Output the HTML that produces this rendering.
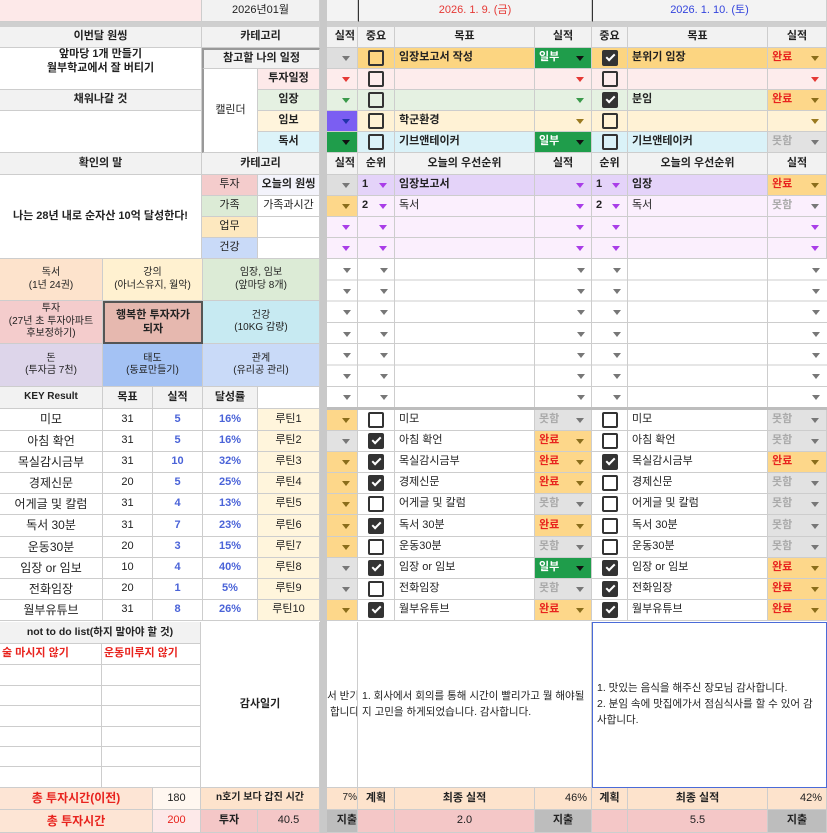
<!DOCTYPE html>
<html><head><meta charset="utf-8"><style>
body{margin:0;width:827px;height:833px;position:relative;overflow:hidden;background:#fff;font-family:"Liberation Sans","Noto Sans CJK KR",sans-serif;color:#222}
.c{position:absolute;box-sizing:border-box;border-right:1px solid #cdcdcd;border-bottom:1px solid #cdcdcd;display:flex;align-items:center;justify-content:center;font-size:11px;overflow:hidden;white-space:nowrap;text-align:center;line-height:1.25}
.l{justify-content:flex-start;padding-left:4px}
.h{background:#f2f2f2;font-weight:bold}
.b{font-weight:bold}
.w{white-space:normal}
.dd{position:absolute;right:7px;top:50%;margin-top:-2px;width:0;height:0;border-left:4px solid transparent;border-right:4px solid transparent;border-top:5px solid #777}
.cb{width:12px;height:12px;border:2px solid #333;border-radius:2px;box-sizing:content-box;position:relative}
.cb.k{background:#333}
.cb.k:after{content:"";position:absolute;left:4px;top:0px;width:3px;height:7px;border:solid #fff;border-width:0 2px 2px 0;transform:rotate(45deg)}
.red{color:#e8231e;font-weight:bold}
.gr{color:#aaa;font-weight:bold}
.blu{color:#4a63d8;font-weight:bold}
</style></head><body>
<!-- top row -->
<div class="c" style="left:0;top:0;width:202px;height:22px;background:#fde9e9"></div>
<div class="c h" style="left:202px;top:0;width:118px;height:22px;font-weight:normal">2026년01월</div>
<div class="c" style="left:327px;top:0;width:31px;height:22px;background:#f3f3f3"></div>
<div class="c" style="left:358px;top:0;width:234px;height:22px;background:#f3f3f3;color:#e53935;border-left:1px solid #333">2026. 1. 9. (금)</div>
<div class="c" style="left:592px;top:0;width:235px;height:22px;background:#f3f3f3;color:#3344dd;border-left:1px solid #333">2026. 1. 10. (토)</div>
<div style="position:absolute;left:0;top:22px;width:827px;height:5px;background:#cfcfcf"></div>
<div style="position:absolute;left:320px;top:0;width:7px;height:833px;background:#c9c9c9"></div>

<!-- left top -->
<div class="c h" style="left:0;top:27px;width:202px;height:21px">이번달 원씽</div>
<div class="c b w" style="left:0;top:48px;width:202px;height:42px;align-items:flex-start">앞마당 1개 만들기<br>월부학교에서 잘 버티기</div>
<div class="c h" style="left:0;top:90px;width:202px;height:21px">채워나갈 것</div>
<div class="c" style="left:0;top:111px;width:202px;height:42px"></div>
<div class="c h" style="left:0;top:153px;width:202px;height:22px">확인의 말</div>
<div class="c b" style="left:0;top:175px;width:202px;height:84px">나는 28년 내로 순자산 10억 달성한다!</div>

<div class="c h" style="left:202px;top:27px;width:118px;height:21px">카테고리</div>
<div class="c h" style="left:202px;top:48px;width:118px;height:21px;border-left:2px solid #999;border-top:2px solid #999">참고할 나의 일정</div>
<div class="c" style="left:202px;top:69px;width:56px;height:84px;border-left:2px solid #999">캘린더</div>
<div class="c b" style="left:258px;top:69px;width:62px;height:21px;background:#fde9e9">투자일정</div>
<div class="c b" style="left:258px;top:90px;width:62px;height:21px;background:#e5f1e2">임장</div>
<div class="c b" style="left:258px;top:111px;width:62px;height:21px;background:#fff4dc">임보</div>
<div class="c b" style="left:258px;top:132px;width:62px;height:21px;background:#dcf3f9">독서</div>
<div class="c h" style="left:202px;top:153px;width:118px;height:22px">카테고리</div>
<div class="c" style="left:202px;top:175px;width:56px;height:21px;background:#f4cccc">투자</div>
<div class="c b" style="left:258px;top:175px;width:62px;height:21px;background:#f3f3fb">오늘의 원씽</div>
<div class="c" style="left:202px;top:196px;width:56px;height:21px;background:#dcebd6">가족</div>
<div class="c" style="left:258px;top:196px;width:62px;height:21px">가족과시간</div>
<div class="c" style="left:202px;top:217px;width:56px;height:21px;background:#fde8bf">업무</div>
<div class="c" style="left:258px;top:217px;width:62px;height:21px"></div>
<div class="c" style="left:202px;top:238px;width:56px;height:21px;background:#c9daf8">건강</div>
<div class="c" style="left:258px;top:238px;width:62px;height:21px"></div>

<!-- mandalart -->
<div class="c w" style="left:0;top:259px;width:103px;height:42px;background:#fde3cc;font-size:10px">독서<br>(1년 24권)</div>
<div class="c w" style="left:103px;top:259px;width:100px;height:42px;background:#fff1d0;font-size:10px">강의<br>(아너스유지, 월악)</div>
<div class="c w" style="left:203px;top:259px;width:117px;height:42px;background:#dcebd6;font-size:10px">임장, 임보<br>(앞마당 8개)</div>
<div class="c w" style="left:0;top:301px;width:103px;height:43px;background:#f4cccc;font-size:10px">투자<br>(27년 초 투자아파트<br>후보정하기)</div>
<div class="c b w" style="left:103px;top:301px;width:100px;height:43px;background:#e6b8af;border:2px solid #555">행복한 투자자가<br>되자</div>
<div class="c w" style="left:203px;top:301px;width:117px;height:43px;background:#c7eaf2;font-size:10px">건강<br>(10KG 감량)</div>
<div class="c w" style="left:0;top:344px;width:103px;height:43px;background:#ddd5ea;font-size:10px">돈<br>(투자금 7천)</div>
<div class="c w" style="left:103px;top:344px;width:100px;height:43px;background:#a4c2f4;font-size:10px">태도<br>(동료만들기)</div>
<div class="c w" style="left:203px;top:344px;width:117px;height:43px;background:#c9daf8;font-size:10px">관계<br>(유리공 관리)</div>

<div class="c h" style="left:0;top:387px;width:103px;height:22px;font-size:10px">KEY Result</div>
<div class="c h" style="left:103px;top:387px;width:50px;height:22px">목표</div>
<div class="c h" style="left:153px;top:387px;width:50px;height:22px">실적</div>
<div class="c h" style="left:203px;top:387px;width:55px;height:22px">달성률</div>
<div class="c" style="left:258px;top:387px;width:62px;height:22px"></div>

<!-- routine left -->
<div class="c" style="left:0;top:409px;width:103px;height:22px;font-size:12px">미모</div><div class="c" style="left:103px;top:409px;width:50px;height:22px">31</div><div class="c blu" style="left:153px;top:409px;width:50px;height:22px">5</div><div class="c blu" style="left:203px;top:409px;width:55px;height:22px">16%</div><div class="c" style="left:258px;top:409px;width:62px;height:22px;background:#fff5dc">루틴1</div>
<div class="c" style="left:0;top:431px;width:103px;height:21px;font-size:12px">아침 확언</div><div class="c" style="left:103px;top:431px;width:50px;height:21px">31</div><div class="c blu" style="left:153px;top:431px;width:50px;height:21px">5</div><div class="c blu" style="left:203px;top:431px;width:55px;height:21px">16%</div><div class="c" style="left:258px;top:431px;width:62px;height:21px;background:#fff5dc">루틴2</div>
<div class="c" style="left:0;top:452px;width:103px;height:21px;font-size:12px">목실감시금부</div><div class="c" style="left:103px;top:452px;width:50px;height:21px">31</div><div class="c blu" style="left:153px;top:452px;width:50px;height:21px">10</div><div class="c blu" style="left:203px;top:452px;width:55px;height:21px">32%</div><div class="c" style="left:258px;top:452px;width:62px;height:21px;background:#fff5dc">루틴3</div>
<div class="c" style="left:0;top:473px;width:103px;height:21px;font-size:12px">경제신문</div><div class="c" style="left:103px;top:473px;width:50px;height:21px">20</div><div class="c blu" style="left:153px;top:473px;width:50px;height:21px">5</div><div class="c blu" style="left:203px;top:473px;width:55px;height:21px">25%</div><div class="c" style="left:258px;top:473px;width:62px;height:21px;background:#fff5dc">루틴4</div>
<div class="c" style="left:0;top:494px;width:103px;height:21px;font-size:12px">어게글 및 칼럼</div><div class="c" style="left:103px;top:494px;width:50px;height:21px">31</div><div class="c blu" style="left:153px;top:494px;width:50px;height:21px">4</div><div class="c blu" style="left:203px;top:494px;width:55px;height:21px">13%</div><div class="c" style="left:258px;top:494px;width:62px;height:21px;background:#fff5dc">루틴5</div>
<div class="c" style="left:0;top:515px;width:103px;height:22px;font-size:12px">독서 30분</div><div class="c" style="left:103px;top:515px;width:50px;height:22px">31</div><div class="c blu" style="left:153px;top:515px;width:50px;height:22px">7</div><div class="c blu" style="left:203px;top:515px;width:55px;height:22px">23%</div><div class="c" style="left:258px;top:515px;width:62px;height:22px;background:#fff5dc">루틴6</div>
<div class="c" style="left:0;top:537px;width:103px;height:21px;font-size:12px">운동30분</div><div class="c" style="left:103px;top:537px;width:50px;height:21px">20</div><div class="c blu" style="left:153px;top:537px;width:50px;height:21px">3</div><div class="c blu" style="left:203px;top:537px;width:55px;height:21px">15%</div><div class="c" style="left:258px;top:537px;width:62px;height:21px;background:#fff5dc">루틴7</div>
<div class="c" style="left:0;top:558px;width:103px;height:21px;font-size:12px">임장 or 임보</div><div class="c" style="left:103px;top:558px;width:50px;height:21px">10</div><div class="c blu" style="left:153px;top:558px;width:50px;height:21px">4</div><div class="c blu" style="left:203px;top:558px;width:55px;height:21px">40%</div><div class="c" style="left:258px;top:558px;width:62px;height:21px;background:#fff5dc">루틴8</div>
<div class="c" style="left:0;top:579px;width:103px;height:21px;font-size:12px">전화임장</div><div class="c" style="left:103px;top:579px;width:50px;height:21px">20</div><div class="c blu" style="left:153px;top:579px;width:50px;height:21px">1</div><div class="c blu" style="left:203px;top:579px;width:55px;height:21px">5%</div><div class="c" style="left:258px;top:579px;width:62px;height:21px;background:#fff5dc">루틴9</div>
<div class="c" style="left:0;top:600px;width:103px;height:21px;font-size:12px">월부유튜브</div><div class="c" style="left:103px;top:600px;width:50px;height:21px">31</div><div class="c blu" style="left:153px;top:600px;width:50px;height:21px">8</div><div class="c blu" style="left:203px;top:600px;width:55px;height:21px">26%</div><div class="c" style="left:258px;top:600px;width:62px;height:21px;background:#fff5dc">루틴10</div>

<!-- not to do -->
<div class="c h" style="left:0;top:622px;width:201px;height:22px;font-size:10.5px">not to do list(하지 말아야 할 것)</div>
<div class="c red l" style="left:0;top:644px;width:102px;height:21px;padding-left:2px">술 마시지 않기</div>
<div class="c red l" style="left:102px;top:644px;width:99px;height:21px;padding-left:2px">운동미루지 않기</div>
<div class="c" style="left:0;top:665px;width:102px;height:21px"></div><div class="c" style="left:102px;top:665px;width:99px;height:21px"></div>
<div class="c" style="left:0;top:686px;width:102px;height:20px"></div><div class="c" style="left:102px;top:686px;width:99px;height:20px"></div>
<div class="c" style="left:0;top:706px;width:102px;height:21px"></div><div class="c" style="left:102px;top:706px;width:99px;height:21px"></div>
<div class="c" style="left:0;top:727px;width:102px;height:20px"></div><div class="c" style="left:102px;top:727px;width:99px;height:20px"></div>
<div class="c" style="left:0;top:747px;width:102px;height:20px"></div><div class="c" style="left:102px;top:747px;width:99px;height:20px"></div>
<div class="c" style="left:0;top:767px;width:102px;height:21px"></div><div class="c" style="left:102px;top:767px;width:99px;height:21px"></div>
<div class="c b" style="left:201px;top:622px;width:119px;height:166px">감사일기</div>

<!-- bottom left -->
<div class="c red" style="left:0;top:788px;width:153px;height:22px;background:#fde5d5;font-size:12px">총 투자시간(이전)</div>
<div class="c" style="left:153px;top:788px;width:48px;height:22px;background:#fff7f0">180</div>
<div class="c b" style="left:201px;top:788px;width:119px;height:22px;background:#fde3cc;font-size:10px">n호기 보다 갑진 시간</div>
<div class="c red" style="left:0;top:810px;width:153px;height:23px;background:#fde5d5;font-size:12px">총 투자시간</div>
<div class="c red" style="left:153px;top:810px;width:48px;height:23px;background:#fde9e9;font-weight:normal">200</div>
<div class="c b" style="left:201px;top:810px;width:57px;height:23px;background:#f4c7c7">투자</div>
<div class="c" style="left:258px;top:810px;width:62px;height:23px;background:#f4c7c7">40.5</div>

<!-- RIGHT: block 1 headers -->
<div class="c h" style="left:327px;top:27px;width:31px;height:21px;justify-content:flex-end;padding-right:2px">실적</div>
<div class="c h" style="left:358px;top:27px;width:37px;height:21px">중요</div>
<div class="c h" style="left:395px;top:27px;width:140px;height:21px">목표</div>
<div class="c h" style="left:535px;top:27px;width:57px;height:21px">실적</div>
<div class="c h" style="left:592px;top:27px;width:36px;height:21px">중요</div>
<div class="c h" style="left:628px;top:27px;width:140px;height:21px">목표</div>
<div class="c h" style="left:768px;top:27px;width:59px;height:21px">실적</div>

<!-- r1 -->
<div class="c" style="left:327px;top:48px;width:31px;height:21px;background:#dedede"><span class="dd"></span></div>
<div class="c" style="left:358px;top:48px;width:37px;height:21px;background:#fcd581"><span class="cb"></span></div>
<div class="c l b" style="left:395px;top:48px;width:140px;height:21px;background:#fcd581">임장보고서 작성</div>
<div class="c l b" style="left:535px;top:48px;width:57px;height:21px;background:#1f9d4b;color:#fff">일부<span class="dd" style="border-top-color:#111"></span></div>
<div class="c" style="left:592px;top:48px;width:36px;height:21px;background:#fcd581"><span class="cb k"></span></div>
<div class="c l b" style="left:628px;top:48px;width:140px;height:21px;background:#fcd581">분위기 임장</div>
<div class="c l red" style="left:768px;top:48px;width:59px;height:21px;background:#fdd78a">완료<span class="dd" style="border-top-color:#8a6d1b"></span></div>
<!-- r2 -->
<div class="c" style="left:327px;top:69px;width:31px;height:21px;background:#fdecec"><span class="dd" style="border-top-color:#e53935"></span></div>
<div class="c" style="left:358px;top:69px;width:37px;height:21px;background:#fdecec"><span class="cb"></span></div>
<div class="c" style="left:395px;top:69px;width:140px;height:21px;background:#fdecec"></div>
<div class="c" style="left:535px;top:69px;width:57px;height:21px;background:#fdecec"><span class="dd" style="border-top-color:#e53935"></span></div>
<div class="c" style="left:592px;top:69px;width:36px;height:21px;background:#fdecec"><span class="cb"></span></div>
<div class="c" style="left:628px;top:69px;width:140px;height:21px;background:#fdecec"></div>
<div class="c" style="left:768px;top:69px;width:59px;height:21px;background:#fdecec"><span class="dd" style="border-top-color:#e53935"></span></div>
<!-- r3 -->
<div class="c" style="left:327px;top:90px;width:31px;height:21px;background:#e5f1e2"><span class="dd" style="border-top-color:#3a9a4a"></span></div>
<div class="c" style="left:358px;top:90px;width:37px;height:21px;background:#e5f1e2"><span class="cb"></span></div>
<div class="c" style="left:395px;top:90px;width:140px;height:21px;background:#e5f1e2"></div>
<div class="c" style="left:535px;top:90px;width:57px;height:21px;background:#e5f1e2"><span class="dd" style="border-top-color:#3a9a4a"></span></div>
<div class="c" style="left:592px;top:90px;width:36px;height:21px;background:#e5f1e2"><span class="cb k"></span></div>
<div class="c l b" style="left:628px;top:90px;width:140px;height:21px;background:#e5f1e2">분임</div>
<div class="c l red" style="left:768px;top:90px;width:59px;height:21px;background:#fdd78a">완료<span class="dd" style="border-top-color:#8a6d1b"></span></div>
<!-- r4 -->
<div class="c" style="left:327px;top:111px;width:31px;height:21px;background:#7b5ef2"><span class="dd" style="border-top-color:#2233aa"></span></div>
<div class="c" style="left:358px;top:111px;width:37px;height:21px;background:#fff2d5"><span class="cb"></span></div>
<div class="c l b" style="left:395px;top:111px;width:140px;height:21px;background:#fff2d5">학군환경</div>
<div class="c" style="left:535px;top:111px;width:57px;height:21px;background:#fff2d5"><span class="dd" style="border-top-color:#9a7a20"></span></div>
<div class="c" style="left:592px;top:111px;width:36px;height:21px;background:#fff2d5"><span class="cb"></span></div>
<div class="c" style="left:628px;top:111px;width:140px;height:21px;background:#fff2d5"></div>
<div class="c" style="left:768px;top:111px;width:59px;height:21px;background:#fff2d5"><span class="dd" style="border-top-color:#9a7a20"></span></div>
<!-- r5 -->
<div class="c" style="left:327px;top:132px;width:31px;height:21px;background:#1f9d4b"><span class="dd" style="border-top-color:#111"></span></div>
<div class="c" style="left:358px;top:132px;width:37px;height:21px;background:#daf2f8"><span class="cb"></span></div>
<div class="c l b" style="left:395px;top:132px;width:140px;height:21px;background:#daf2f8">기브앤테이커</div>
<div class="c l b" style="left:535px;top:132px;width:57px;height:21px;background:#1f9d4b;color:#fff">일부<span class="dd" style="border-top-color:#111"></span></div>
<div class="c" style="left:592px;top:132px;width:36px;height:21px;background:#daf2f8"><span class="cb"></span></div>
<div class="c l b" style="left:628px;top:132px;width:140px;height:21px;background:#daf2f8">기브앤테이커</div>
<div class="c l gr" style="left:768px;top:132px;width:59px;height:21px;background:#e2e2e2">못함<span class="dd"></span></div>

<!-- priority header -->
<div class="c h" style="left:327px;top:153px;width:31px;height:22px;justify-content:flex-end;padding-right:2px">실적</div>
<div class="c h" style="left:358px;top:153px;width:37px;height:22px">순위</div>
<div class="c h" style="left:395px;top:153px;width:140px;height:22px">오늘의 우선순위</div>
<div class="c h" style="left:535px;top:153px;width:57px;height:22px">실적</div>
<div class="c h" style="left:592px;top:153px;width:36px;height:22px">순위</div>
<div class="c h" style="left:628px;top:153px;width:140px;height:22px">오늘의 우선순위</div>
<div class="c h" style="left:768px;top:153px;width:59px;height:22px">실적</div>
<!-- p1 -->
<div class="c" style="left:327px;top:175px;width:31px;height:21px;background:#dedede"><span class="dd"></span></div>
<div class="c l b" style="left:358px;top:175px;width:37px;height:21px;background:#e4d3f9">1<span class="dd" style="border-top-color:#a93de8"></span></div>
<div class="c l b" style="left:395px;top:175px;width:140px;height:21px;background:#e4d3f9">임장보고서</div>
<div class="c" style="left:535px;top:175px;width:57px;height:21px;background:#e4d3f9"><span class="dd" style="border-top-color:#a93de8"></span></div>
<div class="c l b" style="left:592px;top:175px;width:36px;height:21px;background:#e4d3f9">1<span class="dd" style="border-top-color:#a93de8"></span></div>
<div class="c l b" style="left:628px;top:175px;width:140px;height:21px;background:#e4d3f9">임장</div>
<div class="c l red" style="left:768px;top:175px;width:59px;height:21px;background:#fdd78a">완료<span class="dd" style="border-top-color:#8a6d1b"></span></div>
<!-- p2 -->
<div class="c" style="left:327px;top:196px;width:31px;height:21px;background:#fdd78a"><span class="dd" style="border-top-color:#8a6d1b"></span></div>
<div class="c l b" style="left:358px;top:196px;width:37px;height:21px;background:#fbeffd">2<span class="dd" style="border-top-color:#a93de8"></span></div>
<div class="c l" style="left:395px;top:196px;width:140px;height:21px;background:#fbeffd">독서</div>
<div class="c" style="left:535px;top:196px;width:57px;height:21px;background:#fbeffd"><span class="dd" style="border-top-color:#a93de8"></span></div>
<div class="c l b" style="left:592px;top:196px;width:36px;height:21px;background:#fbeffd">2<span class="dd" style="border-top-color:#a93de8"></span></div>
<div class="c l" style="left:628px;top:196px;width:140px;height:21px;background:#fbeffd">독서</div>
<div class="c l gr" style="left:768px;top:196px;width:59px;height:21px;background:#fbeffd">못함<span class="dd"></span></div>
<!-- p3,p4 -->
<div class="c" style="left:327px;top:217px;width:31px;height:21px;background:#fbeffd"><span class="dd" style="border-top-color:#a93de8"></span></div>
<div class="c" style="left:358px;top:217px;width:37px;height:21px;background:#fbeffd"><span class="dd" style="border-top-color:#a93de8"></span></div>
<div class="c" style="left:395px;top:217px;width:140px;height:21px;background:#fbeffd"></div>
<div class="c" style="left:535px;top:217px;width:57px;height:21px;background:#fbeffd"><span class="dd" style="border-top-color:#a93de8"></span></div>
<div class="c" style="left:592px;top:217px;width:36px;height:21px;background:#fbeffd"><span class="dd" style="border-top-color:#a93de8"></span></div>
<div class="c" style="left:628px;top:217px;width:140px;height:21px;background:#fbeffd"></div>
<div class="c" style="left:768px;top:217px;width:59px;height:21px;background:#fbeffd"><span class="dd" style="border-top-color:#a93de8"></span></div>
<div class="c" style="left:327px;top:238px;width:31px;height:21px;background:#fbeffd"><span class="dd" style="border-top-color:#a93de8"></span></div>
<div class="c" style="left:358px;top:238px;width:37px;height:21px;background:#fbeffd"><span class="dd" style="border-top-color:#a93de8"></span></div>
<div class="c" style="left:395px;top:238px;width:140px;height:21px;background:#fbeffd"></div>
<div class="c" style="left:535px;top:238px;width:57px;height:21px;background:#fbeffd"><span class="dd" style="border-top-color:#a93de8"></span></div>
<div class="c" style="left:592px;top:238px;width:36px;height:21px;background:#fbeffd"><span class="dd" style="border-top-color:#a93de8"></span></div>
<div class="c" style="left:628px;top:238px;width:140px;height:21px;background:#fbeffd"></div>
<div class="c" style="left:768px;top:238px;width:59px;height:21px;background:#fbeffd"><span class="dd" style="border-top-color:#a93de8"></span></div>

<!-- empty white rows 259-408 -->
<div style="position:absolute;left:327px;top:259px;width:500px;height:149px;
background:
repeating-linear-gradient(to bottom,transparent 0,transparent 20.3px,#cdcdcd 20.3px,#cdcdcd 21.3px)"></div>
<div style="position:absolute;top:259px;height:149px;left:357px;width:1px;background:#cdcdcd"></div>
<div style="position:absolute;top:259px;height:149px;left:394px;width:1px;background:#cdcdcd"></div>
<div style="position:absolute;top:259px;height:149px;left:534px;width:1px;background:#cdcdcd"></div>
<div style="position:absolute;top:259px;height:149px;left:591px;width:1px;background:#cdcdcd"></div>
<div style="position:absolute;top:259px;height:149px;left:627px;width:1px;background:#cdcdcd"></div>
<div style="position:absolute;top:259px;height:149px;left:767px;width:1px;background:#cdcdcd"></div>
<div style="position:absolute;left:327px;top:259px;width:500px;height:149px;font-size:0">
<div style="position:absolute;left:0;top:0;width:31px;height:149px;background:repeating-linear-gradient(to bottom,transparent 0,transparent 8px,transparent 8px)"></div>
</div>
<!-- triangles for empty rows -->
<div style="position:absolute;left:0;top:0">
<span class="dd" style="left:343px;top:270px;right:auto"></span><span class="dd" style="left:380px;top:270px;right:auto"></span><span class="dd" style="left:577px;top:270px;right:auto"></span><span class="dd" style="left:613px;top:270px;right:auto"></span><span class="dd" style="left:812px;top:270px;right:auto"></span>
<span class="dd" style="left:343px;top:291px;right:auto"></span><span class="dd" style="left:380px;top:291px;right:auto"></span><span class="dd" style="left:577px;top:291px;right:auto"></span><span class="dd" style="left:613px;top:291px;right:auto"></span><span class="dd" style="left:812px;top:291px;right:auto"></span>
<span class="dd" style="left:343px;top:312px;right:auto"></span><span class="dd" style="left:380px;top:312px;right:auto"></span><span class="dd" style="left:577px;top:312px;right:auto"></span><span class="dd" style="left:613px;top:312px;right:auto"></span><span class="dd" style="left:812px;top:312px;right:auto"></span>
<span class="dd" style="left:343px;top:334px;right:auto"></span><span class="dd" style="left:380px;top:334px;right:auto"></span><span class="dd" style="left:577px;top:334px;right:auto"></span><span class="dd" style="left:613px;top:334px;right:auto"></span><span class="dd" style="left:812px;top:334px;right:auto"></span>
<span class="dd" style="left:343px;top:355px;right:auto"></span><span class="dd" style="left:380px;top:355px;right:auto"></span><span class="dd" style="left:577px;top:355px;right:auto"></span><span class="dd" style="left:613px;top:355px;right:auto"></span><span class="dd" style="left:812px;top:355px;right:auto"></span>
<span class="dd" style="left:343px;top:376px;right:auto"></span><span class="dd" style="left:380px;top:376px;right:auto"></span><span class="dd" style="left:577px;top:376px;right:auto"></span><span class="dd" style="left:613px;top:376px;right:auto"></span><span class="dd" style="left:812px;top:376px;right:auto"></span>
<span class="dd" style="left:343px;top:397px;right:auto"></span><span class="dd" style="left:380px;top:397px;right:auto"></span><span class="dd" style="left:577px;top:397px;right:auto"></span><span class="dd" style="left:613px;top:397px;right:auto"></span><span class="dd" style="left:812px;top:397px;right:auto"></span>
</div>
<div style="position:absolute;left:327px;top:407px;width:500px;height:3px;background:#bdbdbd"></div>

<!-- routine rows right -->
<div class="c" style="left:327px;top:410px;width:31px;height:21px;background:#fdd78a"><span class="dd" style="border-top-color:#8a6d1b"></span></div><div class="c" style="left:358px;top:410px;width:37px;height:21px"><span class="cb"></span></div><div class="c l" style="left:395px;top:410px;width:140px;height:21px">미모</div><div class="c l gr" style="left:535px;top:410px;width:57px;height:21px;background:#e2e2e2">못함<span class="dd"></span></div><div class="c" style="left:592px;top:410px;width:36px;height:21px"><span class="cb"></span></div><div class="c l" style="left:628px;top:410px;width:140px;height:21px">미모</div><div class="c l gr" style="left:768px;top:410px;width:59px;height:21px;background:#e2e2e2">못함<span class="dd"></span></div>
<div class="c" style="left:327px;top:431px;width:31px;height:21px;background:#e2e2e2"><span class="dd"></span></div><div class="c" style="left:358px;top:431px;width:37px;height:21px"><span class="cb k"></span></div><div class="c l" style="left:395px;top:431px;width:140px;height:21px">아침 확언</div><div class="c l red" style="left:535px;top:431px;width:57px;height:21px;background:#fdd78a">완료<span class="dd" style="border-top-color:#8a6d1b"></span></div><div class="c" style="left:592px;top:431px;width:36px;height:21px"><span class="cb"></span></div><div class="c l" style="left:628px;top:431px;width:140px;height:21px">아침 확언</div><div class="c l gr" style="left:768px;top:431px;width:59px;height:21px;background:#e2e2e2">못함<span class="dd"></span></div>
<div class="c" style="left:327px;top:452px;width:31px;height:21px;background:#fdd78a"><span class="dd" style="border-top-color:#8a6d1b"></span></div><div class="c" style="left:358px;top:452px;width:37px;height:21px"><span class="cb k"></span></div><div class="c l" style="left:395px;top:452px;width:140px;height:21px">목실감시금부</div><div class="c l red" style="left:535px;top:452px;width:57px;height:21px;background:#fdd78a">완료<span class="dd" style="border-top-color:#8a6d1b"></span></div><div class="c" style="left:592px;top:452px;width:36px;height:21px"><span class="cb k"></span></div><div class="c l" style="left:628px;top:452px;width:140px;height:21px">목실감시금부</div><div class="c l red" style="left:768px;top:452px;width:59px;height:21px;background:#fdd78a">완료<span class="dd" style="border-top-color:#8a6d1b"></span></div>
<div class="c" style="left:327px;top:473px;width:31px;height:21px;background:#fdd78a"><span class="dd" style="border-top-color:#8a6d1b"></span></div><div class="c" style="left:358px;top:473px;width:37px;height:21px"><span class="cb k"></span></div><div class="c l" style="left:395px;top:473px;width:140px;height:21px">경제신문</div><div class="c l red" style="left:535px;top:473px;width:57px;height:21px;background:#fdd78a">완료<span class="dd" style="border-top-color:#8a6d1b"></span></div><div class="c" style="left:592px;top:473px;width:36px;height:21px"><span class="cb"></span></div><div class="c l" style="left:628px;top:473px;width:140px;height:21px">경제신문</div><div class="c l gr" style="left:768px;top:473px;width:59px;height:21px;background:#e2e2e2">못함<span class="dd"></span></div>
<div class="c" style="left:327px;top:494px;width:31px;height:21px;background:#fdd78a"><span class="dd" style="border-top-color:#8a6d1b"></span></div><div class="c" style="left:358px;top:494px;width:37px;height:21px"><span class="cb"></span></div><div class="c l" style="left:395px;top:494px;width:140px;height:21px">어게글 및 칼럼</div><div class="c l gr" style="left:535px;top:494px;width:57px;height:21px;background:#e2e2e2">못함<span class="dd"></span></div><div class="c" style="left:592px;top:494px;width:36px;height:21px"><span class="cb"></span></div><div class="c l" style="left:628px;top:494px;width:140px;height:21px">어게글 및 칼럼</div><div class="c l gr" style="left:768px;top:494px;width:59px;height:21px;background:#e2e2e2">못함<span class="dd"></span></div>
<div class="c" style="left:327px;top:515px;width:31px;height:22px;background:#fdd78a"><span class="dd" style="border-top-color:#8a6d1b"></span></div><div class="c" style="left:358px;top:515px;width:37px;height:22px"><span class="cb k"></span></div><div class="c l" style="left:395px;top:515px;width:140px;height:22px">독서 30분</div><div class="c l red" style="left:535px;top:515px;width:57px;height:22px;background:#fdd78a">완료<span class="dd" style="border-top-color:#8a6d1b"></span></div><div class="c" style="left:592px;top:515px;width:36px;height:22px"><span class="cb"></span></div><div class="c l" style="left:628px;top:515px;width:140px;height:22px">독서 30분</div><div class="c l gr" style="left:768px;top:515px;width:59px;height:22px;background:#e2e2e2">못함<span class="dd"></span></div>
<div class="c" style="left:327px;top:537px;width:31px;height:21px;background:#fdd78a"><span class="dd" style="border-top-color:#8a6d1b"></span></div><div class="c" style="left:358px;top:537px;width:37px;height:21px"><span class="cb"></span></div><div class="c l" style="left:395px;top:537px;width:140px;height:21px">운동30분</div><div class="c l gr" style="left:535px;top:537px;width:57px;height:21px;background:#e2e2e2">못함<span class="dd"></span></div><div class="c" style="left:592px;top:537px;width:36px;height:21px"><span class="cb"></span></div><div class="c l" style="left:628px;top:537px;width:140px;height:21px">운동30분</div><div class="c l gr" style="left:768px;top:537px;width:59px;height:21px;background:#e2e2e2">못함<span class="dd"></span></div>
<div class="c" style="left:327px;top:558px;width:31px;height:21px;background:#e2e2e2"><span class="dd"></span></div><div class="c" style="left:358px;top:558px;width:37px;height:21px"><span class="cb k"></span></div><div class="c l" style="left:395px;top:558px;width:140px;height:21px">임장 or 임보</div><div class="c l b" style="left:535px;top:558px;width:57px;height:21px;background:#1f9d4b;color:#fff">일부<span class="dd" style="border-top-color:#111"></span></div><div class="c" style="left:592px;top:558px;width:36px;height:21px"><span class="cb k"></span></div><div class="c l" style="left:628px;top:558px;width:140px;height:21px">임장 or 임보</div><div class="c l red" style="left:768px;top:558px;width:59px;height:21px;background:#fdd78a">완료<span class="dd" style="border-top-color:#8a6d1b"></span></div>
<div class="c" style="left:327px;top:579px;width:31px;height:21px;background:#e2e2e2"><span class="dd"></span></div><div class="c" style="left:358px;top:579px;width:37px;height:21px"><span class="cb"></span></div><div class="c l" style="left:395px;top:579px;width:140px;height:21px">전화임장</div><div class="c l gr" style="left:535px;top:579px;width:57px;height:21px;background:#e2e2e2">못함<span class="dd"></span></div><div class="c" style="left:592px;top:579px;width:36px;height:21px"><span class="cb k"></span></div><div class="c l" style="left:628px;top:579px;width:140px;height:21px">전화임장</div><div class="c l red" style="left:768px;top:579px;width:59px;height:21px;background:#fdd78a">완료<span class="dd" style="border-top-color:#8a6d1b"></span></div>
<div class="c" style="left:327px;top:600px;width:31px;height:21px;background:#fdd78a"><span class="dd" style="border-top-color:#8a6d1b"></span></div><div class="c" style="left:358px;top:600px;width:37px;height:21px"><span class="cb k"></span></div><div class="c l" style="left:395px;top:600px;width:140px;height:21px">월부유튜브</div><div class="c l red" style="left:535px;top:600px;width:57px;height:21px;background:#fdd78a">완료<span class="dd" style="border-top-color:#8a6d1b"></span></div><div class="c" style="left:592px;top:600px;width:36px;height:21px"><span class="cb k"></span></div><div class="c l" style="left:628px;top:600px;width:140px;height:21px">월부유튜브</div><div class="c l red" style="left:768px;top:600px;width:59px;height:21px;background:#fdd78a">완료<span class="dd" style="border-top-color:#8a6d1b"></span></div>

<!-- gratitude -->
<div class="c" style="left:327px;top:622px;width:31px;height:166px;justify-content:flex-end;font-size:10.5px;line-height:1.5"><div style="text-align:right;margin-right:-2px">서 반기<br>합니다</div></div>
<div class="c w" style="left:358px;top:622px;width:234px;height:166px;justify-content:flex-start;text-align:left;padding:0 4px;font-size:10.5px;line-height:1.5">1. 회사에서 회의를 통해 시간이 빨리가고 뭘 해야될지 고민을 하게되었습니다. 감사합니다.</div>
<div class="c w" style="left:592px;top:622px;width:235px;height:166px;border:1px solid #4a6bd8;justify-content:flex-start;text-align:left;padding:0 4px;font-size:10.5px;line-height:1.5">1. 맛있는 음식을 해주신 장모님 감사합니다.<br>2. 분임 속에 맛집에가서 점심식사를 할 수 있어 감사합니다.</div>

<!-- bottom right -->
<div class="c" style="left:327px;top:788px;width:31px;height:22px;background:#fde3cc;justify-content:flex-end;font-size:10px">7%</div>
<div class="c b" style="left:358px;top:788px;width:37px;height:22px;background:#fde3cc">계획</div>
<div class="c b" style="left:395px;top:788px;width:140px;height:22px;background:#fde3cc">최종 실적</div>
<div class="c" style="left:535px;top:788px;width:57px;height:22px;background:#fde3cc;justify-content:flex-end;padding-right:4px">46%</div>
<div class="c b" style="left:592px;top:788px;width:36px;height:22px;background:#fde3cc">계획</div>
<div class="c b" style="left:628px;top:788px;width:140px;height:22px;background:#fde3cc">최종 실적</div>
<div class="c" style="left:768px;top:788px;width:59px;height:22px;background:#fde3cc;justify-content:flex-end;padding-right:4px">42%</div>
<div class="c b" style="left:327px;top:810px;width:31px;height:23px;background:#bdbdbd;justify-content:flex-end">지출</div>
<div class="c" style="left:358px;top:810px;width:37px;height:23px;background:#f4c7c7"></div>
<div class="c" style="left:395px;top:810px;width:140px;height:23px;background:#f4c7c7">2.0</div>
<div class="c b" style="left:535px;top:810px;width:57px;height:23px;background:#bdbdbd">지출</div>
<div class="c" style="left:592px;top:810px;width:36px;height:23px;background:#f4c7c7"></div>
<div class="c" style="left:628px;top:810px;width:140px;height:23px;background:#f4c7c7">5.5</div>
<div class="c b" style="left:768px;top:810px;width:59px;height:23px;background:#bdbdbd">지출</div>
</body></html>
